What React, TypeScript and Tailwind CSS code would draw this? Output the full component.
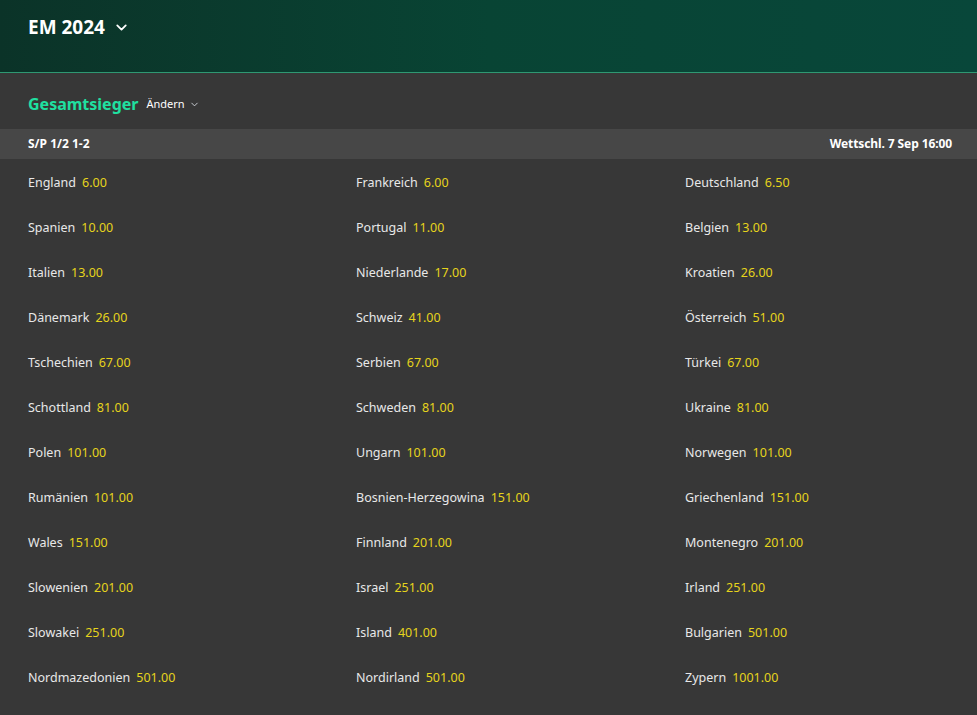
import React from 'react';
import { ChevronDown } from 'lucide-react';

type Outcome = { name: string; odds: string };

const outcomes: Outcome[] = [
    { name: 'England', odds: '6.00' },
    { name: 'Frankreich', odds: '6.00' },
    { name: 'Deutschland', odds: '6.50' },
    { name: 'Spanien', odds: '10.00' },
    { name: 'Portugal', odds: '11.00' },
    { name: 'Belgien', odds: '13.00' },
    { name: 'Italien', odds: '13.00' },
    { name: 'Niederlande', odds: '17.00' },
    { name: 'Kroatien', odds: '26.00' },
    { name: 'Dänemark', odds: '26.00' },
    { name: 'Schweiz', odds: '41.00' },
    { name: 'Österreich', odds: '51.00' },
    { name: 'Tschechien', odds: '67.00' },
    { name: 'Serbien', odds: '67.00' },
    { name: 'Türkei', odds: '67.00' },
    { name: 'Schottland', odds: '81.00' },
    { name: 'Schweden', odds: '81.00' },
    { name: 'Ukraine', odds: '81.00' },
    { name: 'Polen', odds: '101.00' },
    { name: 'Ungarn', odds: '101.00' },
    { name: 'Norwegen', odds: '101.00' },
    { name: 'Rumänien', odds: '101.00' },
    { name: 'Bosnien-Herzegowina', odds: '151.00' },
    { name: 'Griechenland', odds: '151.00' },
    { name: 'Wales', odds: '151.00' },
    { name: 'Finnland', odds: '201.00' },
    { name: 'Montenegro', odds: '201.00' },
    { name: 'Slowenien', odds: '201.00' },
    { name: 'Israel', odds: '251.00' },
    { name: 'Irland', odds: '251.00' },
    { name: 'Slowakei', odds: '251.00' },
    { name: 'Island', odds: '401.00' },
    { name: 'Bulgarien', odds: '501.00' },
    { name: 'Nordmazedonien', odds: '501.00' },
    { name: 'Nordirland', odds: '501.00' },
    { name: 'Zypern', odds: '1001.00' },
];

export default function App() {
    return (
        <div className="min-h-[715px] bg-[#373737] font-['Noto_Sans',sans-serif] text-white">
            <header className="h-[73px] border-b border-[#2f9872] bg-gradient-to-r from-[#0b3328] via-[#084434] to-[#08473a] px-7 pt-[14px]">
                <button className="flex items-center gap-2 text-[19px] font-bold leading-[26px]">
                    EM 2024
                    <ChevronDown size={17} strokeWidth={2.5} />
                </button>
            </header>

            <div className="flex h-[56px] items-center gap-[8px] px-7 pt-[6px]">
                <h2 className="text-[16px] font-bold text-[#1fe0a0]">Gesamtsieger</h2>
                <button className="flex items-center gap-1 text-[11px] text-white">
                    Ändern
                    <ChevronDown size={11} className="text-gray-300" />
                </button>
            </div>

            <div className="flex h-[30px] items-center justify-between bg-[#474747] pl-7 pr-[25px] text-[12px] font-bold">
                <span>S/P 1/2 1-2</span>
                <span className="tracking-[-0.1px]">Wettschl. 7 Sep 16:00</span>
            </div>

            <div className="grid grid-cols-[328px_329px_1fr] pl-7 pt-[2px]">
                {outcomes.map((o) => (
                    <div key={o.name} className="flex h-[45px] items-center gap-[6px] text-[12.5px]">
                        <span className="text-[#e8e8e8]">{o.name}</span>
                        <span className="text-[#e6d41c]">{o.odds}</span>
                    </div>
                ))}
            </div>
        </div>
    );
}
